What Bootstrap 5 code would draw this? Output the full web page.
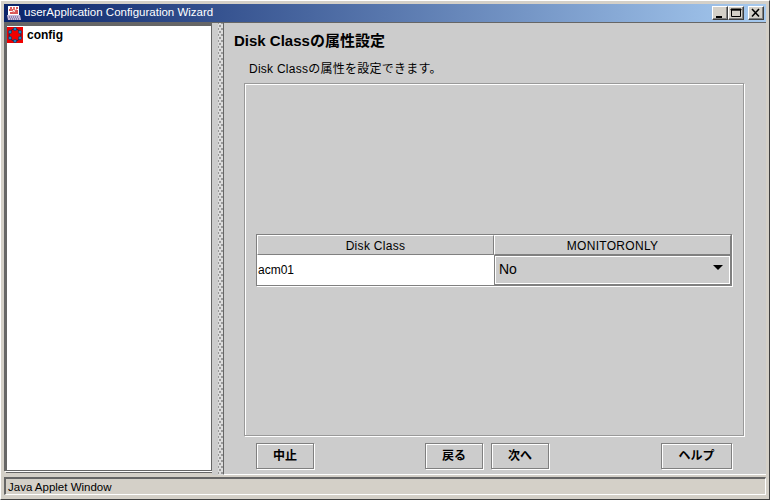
<!DOCTYPE html>
<html lang="ja">
<head>
    <meta charset="UTF-8">
    <title>userApplication Configuration Wizard</title>
    <link href="https://cdn.jsdelivr.net/npm/bootstrap@5.3.0/dist/css/bootstrap.min.css" rel="stylesheet">
    <style>
        html, body { width: 770px; height: 500px; overflow: hidden; background: #d4d0c8; }
        body { font-family: "Liberation Sans", "Noto Sans CJK JP", sans-serif; font-size: 12px; color: #000; }
        .wiz-window { width: 770px; height: 500px; border-right: 1px solid #404040; border-bottom: 1px solid #404040; border-top: 1px solid #fff; border-left: 1px solid #fff; padding: 3px; }
        .wiz-title { height: 18px; padding: 0 2px; background: linear-gradient(90deg, #0a246a, #a6caf0); color: #fff; font-size: 11.5px; flex: none; }
        .wiz-title svg { margin-right: 2px; }
        .wiz-ctl { width: 16px; height: 14px; background: #d4d0c8; border: 1px solid; border-color: #fff #404040 #404040 #fff; box-shadow: inset -1px -1px 0 #808080; padding: 0; line-height: 0; }
        .wiz-main { height: 453px; flex: none; border-top: 1px solid #666; }
        .wiz-tree { width: 208px; flex: none; background: #fff; border-style: solid; border-width: 3px 1px 1px 3px; border-color: #666; margin-bottom: 4px; padding: 0; font-weight: 700; box-shadow: 1px 1px 0 #fff, 2px 2px 0 #666; }
        .wiz-split { width: 11px; flex: none; background: #ccc; padding-left: 6px; }
        .wiz-dots { width: 5px; height: 100%; background-color: #dcdcdc; background-image: radial-gradient(#999 .7px, transparent .8px), radial-gradient(#999 .7px, transparent .8px); background-size: 4px 6px; background-position: 0 0, 2px 3px; }
        .wiz-right { flex: 1; background: #ccc; border-left: 1px solid #666; border-bottom: 1px solid #fff; min-width: 0; }
        .wiz-h { font-size: 15px; font-weight: 700; margin: 8px 0 0 10px; line-height: 20px; height: 20px; }
        .wiz-sub { margin: 10px 0 0 25px; line-height: 16px; height: 16px; letter-spacing: .25px; }
        .wiz-panel { height: 353px; margin: 6px 22px 0 20px; border: 1px solid #999; box-shadow: 1px 1px 0 #fff, inset 1px 1px 0 #fff; padding: 0 11px; }
        .wiz-table { width: 476px; height: 52px; border: 1px solid #808080; box-shadow: 1px 1px 0 #fff; }
        .wiz-colhead { height: 20px; line-height: 20px; text-align: center; border: 1px solid; border-color: #fff #808080 #808080 #fff; background: #ccc; letter-spacing: .3px; }
        .wiz-cell { height: 30px; background: #fff; line-height: 30px; padding-left: 1px; }
        .wiz-combo { height: 30px; background: #ccc; border: 2px solid #808080; outline: 1px solid #fff; outline-offset: -2px; font-size: 14px; padding: 0 6px 0 3px; }
        .wiz-arrow { width: 0; height: 0; border-style: solid; border-width: 5px 5.5px 0 5.5px; border-color: #000 transparent transparent transparent; margin-top: -4px; }
        .wiz-buttons { margin: 7px 34px 0 32px; }
        .wiz-btn { height: 26px; width: 58px; padding: 0; border-radius: 0; background: #ccc; color: #000; font-size: 12px; font-weight: 700; line-height: 24px; border: 1px solid #808080; box-shadow: 1px 1px 0 #fff, inset 1px 1px 0 #fff; }
        .wiz-btn:hover { background: #ccc; color: #000; border-color: #808080; }
        .wiz-back { margin-left: 111px; }
        .wiz-wide { width: 71px; }
        .wiz-status { height: 18px; flex: none; margin-top: 2px; background: #d4d0c8; border-top: 2px solid #666; border-left: 2px solid #666; border-bottom: 1px solid #fff; border-right: 1px solid #fff; line-height: 16px; padding-left: 2px; font-size: 11.5px; }
    </style>
</head>
<body>
    <div class="wiz-window d-flex flex-column">
        <div class="wiz-title d-flex align-items-center">
            <svg width="16" height="16" viewBox="0 0 16 16">
                <rect x="2" y="1" width="11" height="9" fill="#fff"/>
                <path d="M4 3h2M8 2v3M10 3h2M3 5h4M9 6h3M4 8h8" stroke="#d02020" stroke-width="1.3"/>
                <path d="M5 4l3 4M11 4l-4 3" stroke="#e08080" stroke-width=".8"/>
                <path d="M1 10h13l1 5H2z" fill="#c8b8d8"/>
                <path d="M3 12h10M4 14h9" stroke="#505088" stroke-dasharray="1 1"/>
            </svg>
            <span class="flex-grow-1">userApplication Configuration Wizard</span>
            <button class="wiz-ctl" aria-label="min"><svg width="14" height="12" viewBox="0 0 14 12"><path d="M3 9h6v2H3z" fill="#000"/></svg></button>
            <button class="wiz-ctl" aria-label="max"><svg width="14" height="12" viewBox="0 0 14 12"><path d="M2.500 2.500h9v7h-9zM2 2h10v1.200H2z" fill="none" stroke="#000"/></svg></button>
            <button class="wiz-ctl ms-1" aria-label="close"><svg width="14" height="12" viewBox="0 0 14 12"><path d="M3 2l7 7.500M10 2l-7 7.500" stroke="#000" stroke-width="1.600"/></svg></button>
        </div>
        <div class="wiz-main d-flex">
            <div class="wiz-tree">
                <div class="d-flex align-items-center">
                    <svg class="me-1" width="16" height="16" viewBox="0 0 16 16">
                        <rect width="16" height="16" fill="#f00000"/>
                        <circle cx="8" cy="8" r="6" fill="none" stroke="#102850"/>
                        <g fill="#2080c0" stroke="#102850" stroke-width=".5">
                            <circle cx="8" cy="2" r="1.700"/><circle cx="13" cy="5" r="1.700"/><circle cx="13" cy="11" r="1.700"/>
                            <circle cx="8" cy="14" r="1.700"/><circle cx="3" cy="11" r="1.700"/><circle cx="3" cy="5" r="1.700"/>
                        </g>
                    </svg>
                    <span>config</span>
                </div>
            </div>
            <div class="wiz-split"><div class="wiz-dots"></div></div>
            <div class="wiz-right d-flex flex-column">
                <div class="wiz-h">Disk Classの属性設定</div>
                <div class="wiz-sub">Disk Classの属性を設定できます。</div>
                <div class="wiz-panel d-flex align-items-center">
                    <div class="wiz-table">
                        <div class="d-flex">
                            <div class="wiz-colhead w-50">Disk Class</div>
                            <div class="wiz-colhead w-50">MONITORONLY</div>
                        </div>
                        <div class="d-flex">
                            <div class="wiz-cell w-50">acm01</div>
                            <div class="wiz-combo w-50 d-flex align-items-center justify-content-between">
                                <span>No</span>
                                <span class="wiz-arrow"></span>
                            </div>
                        </div>
                    </div>
                </div>
                <div class="wiz-buttons d-flex">
                    <button class="btn wiz-btn">中止</button>
                    <button class="btn wiz-btn wiz-back">戻る</button>
                    <button class="btn wiz-btn ms-2">次へ</button>
                    <button class="btn wiz-btn wiz-wide ms-auto">ヘルプ</button>
                </div>
            </div>
        </div>
        <div class="wiz-status">Java Applet Window</div>
    </div>
    <script src="https://cdn.jsdelivr.net/npm/bootstrap@5.3.0/dist/js/bootstrap.bundle.min.js"></script>
</body>
</html>
